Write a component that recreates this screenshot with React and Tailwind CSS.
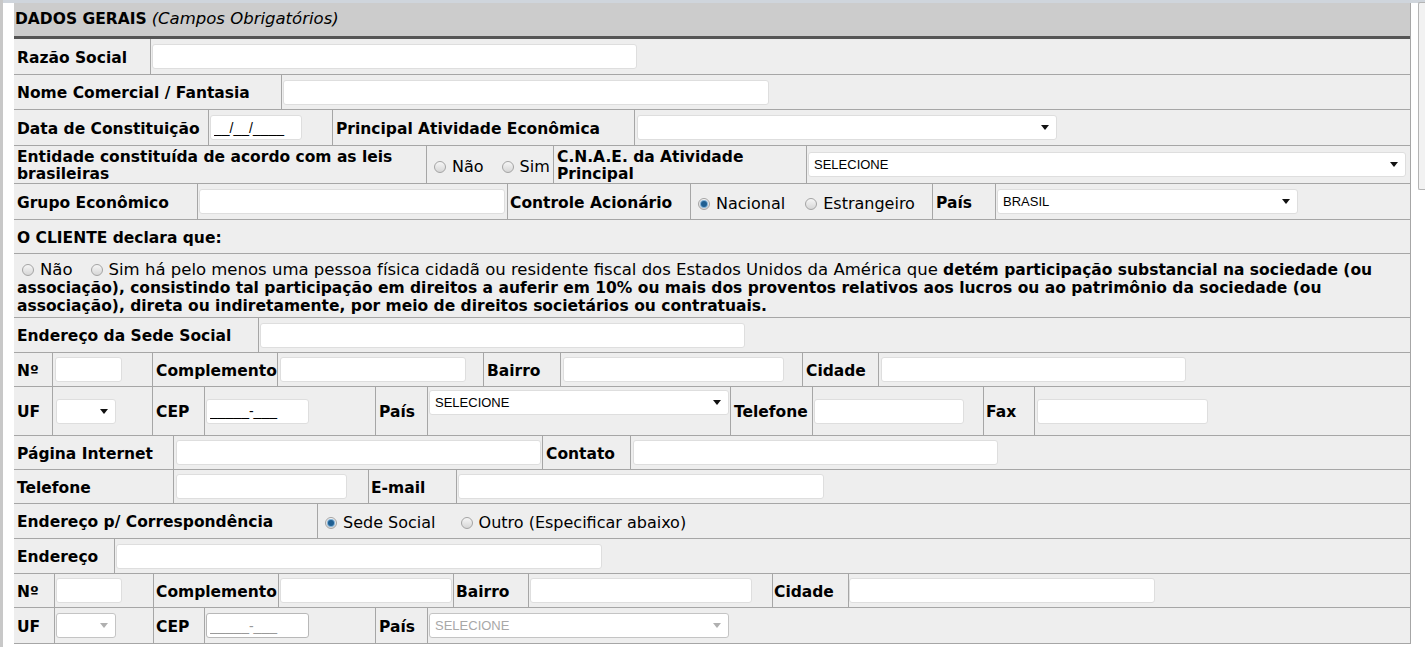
import { useState } from 'react';

const font = "font-['DejaVu_Sans',Verdana,sans-serif]";

function Field({ className = '', value = '', disabled = false }) {
  return (
    <input
      type="text"
      readOnly
      defaultValue={value}
      className={`h-[25px] bg-white rounded-[3px] border px-[3px] text-[14px] font-['Liberation_Sans',Arial,sans-serif] outline-none ${
        disabled ? 'border-[#b8b8b8] text-[#9a9a9a]' : 'border-[#dedede] text-black'
      } ${className}`}
    />
  );
}

function Select({ className = '', value = '', disabled = false }) {
  return (
    <div
      className={`h-[25px] bg-white rounded-[3px] border flex items-center justify-between pl-[5px] pr-[7px] text-[13px] font-['Liberation_Sans',Arial,sans-serif] ${
        disabled ? 'border-[#c4c4c4] text-[#a8a8a8]' : 'border-[#dedede] text-black'
      } ${className}`}
    >
      <span>{value}</span>
      <svg width="8" height="5" viewBox="0 0 8 5">
        <path d="M0 0 L8 0 L4 5 Z" fill={disabled ? '#b0b0b0' : '#111'} />
      </svg>
    </div>
  );
}

function Dot({ checked, className = '' }) {
  return (
    <span
      className={`inline-flex w-[12px] h-[12px] rounded-full border border-[#a4a4a4] bg-gradient-to-b from-[#f6f6f6] to-[#d6d6d6] items-center justify-center ${className}`}
    >
      {checked && <span className="w-[6px] h-[6px] rounded-full bg-[#1f5f92] ring-1 ring-[#7fb0d6]" />}
    </span>
  );
}

function Radio({ checked, label, className = '' }) {
  return (
    <span className={`inline-flex items-center ${className}`}>
      <Dot checked={checked} />
      <span className="ml-[6px] text-[16px] font-normal">{label}</span>
    </span>
  );
}

const row = 'flex border-b border-[#a6a6a6] bg-[#eeeeee]';
const cell = 'flex items-center border-l border-[#a6a6a6]';
const lbl = 'flex items-center pl-[3px] pt-[4px] font-bold text-[15.5px]';
const bcell = 'pt-[4px] font-bold text-[15.5px]';

export default function App() {
  const [corresp] = useState('sede');

  return (
    <div className={`relative min-h-[647px] bg-white ${font} text-black`}>
      <div className="h-[3px] bg-[#cfd5dc]" />
      <div className="absolute left-0 top-0 w-[3px] h-[647px] bg-[#c8c8c8]" />

      <div className="ml-[14px] w-[1397px] border-r border-[#a6a6a6]">
        <div className="h-[36px] bg-[#cccccc] border-b-[3px] border-[#555555] flex items-center pl-[1px]">
          <span className="font-bold text-[15.5px]">DADOS GERAIS</span>
          <span className="italic text-[16.5px] ml-[5px]">(Campos Obrigatórios)</span>
        </div>

        {/* Razão Social */}
        <div className={`${row} h-[36px]`}>
          <div className={`${lbl} w-[136px]`}>Razão Social</div>
          <div className={`${cell} flex-1 pl-[1px]`}>
            <Field className="w-[485px]" />
          </div>
        </div>

        {/* Nome Comercial */}
        <div className={`${row} h-[35px]`}>
          <div className={`${lbl} w-[267px]`}>Nome Comercial / Fantasia</div>
          <div className={`${cell} flex-1 pl-[1px]`}>
            <Field className="w-[486px]" />
          </div>
        </div>

        {/* Data de Constituição */}
        <div className={`${row} h-[36px]`}>
          <div className={`${lbl} w-[194px]`}>Data de Constituição</div>
          <div className={`${cell} w-[124px] pl-[1px]`}>
            <Field className="w-[92px]" value="__/__/____" />
          </div>
          <div className={`${cell} ${bcell} w-[302px] pl-[3px]`}>Principal Atividade Econômica</div>
          <div className={`${cell} flex-1 pl-[2px]`}>
            <Select className="w-[420px]" />
          </div>
        </div>

        {/* Entidade constituída */}
        <div className={`${row} h-[38px]`}>
          <div className="flex items-center pl-[3px] pt-[2px] font-bold text-[15.5px] w-[412px] leading-[17px]">
            Entidade constituída de acordo com as leis brasileiras
          </div>
          <div className={`${cell} w-[127px] pl-[7px] pt-[4px]`}>
            <Radio label="Não" />
            <Radio label="Sim" className="ml-[18px]" />
          </div>
          <div className={`${cell} w-[253px] pl-[3px] pt-[2px] font-bold text-[15.5px] leading-[17px]`}>
            C.N.A.E. da Atividade Principal
          </div>
          <div className={`${cell} flex-1 pl-[1px]`}>
            <Select className="w-[598px]" value="SELECIONE" />
          </div>
        </div>

        {/* Grupo Econômico */}
        <div className={`${row} h-[36px]`}>
          <div className={`${lbl} w-[183px]`}>Grupo Econômico</div>
          <div className={`${cell} w-[310px] pl-[1px]`}>
            <Field className="w-[306px]" />
          </div>
          <div className={`${cell} ${bcell} w-[183px] pl-[2px]`}>Controle Acionário</div>
          <div className={`${cell} w-[242px] pl-[7px] pt-[4px]`}>
            <Radio checked label="Nacional" />
            <Radio label="Estrangeiro" className="ml-[20px]" />
          </div>
          <div className={`${cell} ${bcell} w-[63px] pl-[3px]`}>País</div>
          <div className={`${cell} flex-1 pl-[1px]`}>
            <Select className="w-[301px]" value="BRASIL" />
          </div>
        </div>

        {/* O CLIENTE declara */}
        <div className={`${row} h-[34px]`}>
          <div className={`${lbl} flex-1`}>O CLIENTE declara que:</div>
        </div>

        <div className={`${row} h-[64px]`}>
          <div className="flex items-center px-[3px] pt-[4px] flex-1">
            <p className="text-[15.5px] leading-[18px]">
              <span className="text-[16.5px]">
                <Dot className="ml-[5px] mr-[6px] align-[-1px]" />
                Não
                <Dot className="ml-[18px] mr-[6px] align-[-1px]" />
                Sim há pelo menos uma pessoa física cidadã ou residente fiscal dos Estados Unidos da América que{' '}
              </span>
              <b>
                detém participação substancial na sociedade (ou associação), consistindo tal participação em direitos a
                auferir em 10% ou mais dos proventos relativos aos lucros ou ao patrimônio da sociedade (ou associação),
                direta ou indiretamente, por meio de direitos societários ou contratuais.
              </b>
            </p>
          </div>
        </div>

        {/* Endereço da Sede Social */}
        <div className={`${row} h-[35px]`}>
          <div className={`${lbl} w-[244px]`}>Endereço da Sede Social</div>
          <div className={`${cell} flex-1 pl-[1px]`}>
            <Field className="w-[485px]" />
          </div>
        </div>

        <div className={`${row} h-[34px]`}>
          <div className={`${lbl} w-[38px]`}>Nº</div>
          <div className={`${cell} w-[100px] pl-[2px]`}>
            <Field className="w-[67px]" />
          </div>
          <div className={`${cell} ${bcell} w-[125px] pl-[3px]`}>Complemento</div>
          <div className={`${cell} w-[206px] pl-[2px]`}>
            <Field className="w-[186px]" />
          </div>
          <div className={`${cell} ${bcell} w-[77px] pl-[3px]`}>Bairro</div>
          <div className={`${cell} w-[242px] pl-[2px]`}>
            <Field className="w-[221px]" />
          </div>
          <div className={`${cell} ${bcell} w-[76px] pl-[3px]`}>Cidade</div>
          <div className={`${cell} flex-1 pl-[2px]`}>
            <Field className="w-[305px]" />
          </div>
        </div>

        <div className={`${row} h-[49px]`}>
          <div className={`${lbl} w-[38px]`}>UF</div>
          <div className={`${cell} w-[100px] pl-[3px]`}>
            <Select className="w-[60px]" />
          </div>
          <div className={`${cell} ${bcell} w-[52px] pl-[3px]`}>CEP</div>
          <div className={`${cell} w-[171px] pl-[1px]`}>
            <Field className="w-[103px]" value="_____-___" />
          </div>
          <div className={`${cell} ${bcell} w-[52px] pl-[3px]`}>País</div>
          <div className={`${cell} w-[303px] pl-[1px] !items-start pt-[3px]`}>
            <Select className="w-[300px]" value="SELECIONE" />
          </div>
          <div className={`${cell} ${bcell} w-[82px] pl-[3px]`}>Telefone</div>
          <div className={`${cell} w-[171px] pl-[1px]`}>
            <Field className="w-[150px]" />
          </div>
          <div className={`${cell} ${bcell} w-[51px] pl-[2px]`}>Fax</div>
          <div className={`${cell} flex-1 pl-[2px]`}>
            <Field className="w-[171px]" />
          </div>
        </div>

        <div className={`${row} h-[34px]`}>
          <div className={`${lbl} w-[159px]`}>Página Internet</div>
          <div className={`${cell} w-[369px] pl-[2px]`}>
            <Field className="w-[365px]" />
          </div>
          <div className={`${cell} ${bcell} w-[88px] pl-[3px]`}>Contato</div>
          <div className={`${cell} flex-1 pl-[2px]`}>
            <Field className="w-[365px]" />
          </div>
        </div>

        <div className={`${row} h-[34px]`}>
          <div className={`${lbl} w-[159px]`}>Telefone</div>
          <div className={`${cell} w-[195px] pl-[2px]`}>
            <Field className="w-[171px]" />
          </div>
          <div className={`${cell} ${bcell} w-[88px] pl-[2px]`}>E-mail</div>
          <div className={`${cell} flex-1 pl-[1px]`}>
            <Field className="w-[366px]" />
          </div>
        </div>

        {/* Correspondência */}
        <div className={`${row} h-[35px]`}>
          <div className={`${lbl} w-[303px]`}>Endereço p/ Correspondência</div>
          <div className={`${cell} flex-1 pl-[7px] pt-[4px]`}>
            <Radio checked={corresp === 'sede'} label="Sede Social" />
            <Radio checked={corresp === 'outro'} label="Outro (Especificar abaixo)" className="ml-[25px]" />
          </div>
        </div>

        <div className={`${row} h-[35px]`}>
          <div className={`${lbl} w-[100px]`}>Endereço</div>
          <div className={`${cell} flex-1 pl-[1px]`}>
            <Field className="w-[486px]" />
          </div>
        </div>

        <div className={`${row} h-[34px]`}>
          <div className={`${lbl} w-[40px]`}>Nº</div>
          <div className={`${cell} w-[99px] pl-[1px]`}>
            <Field className="w-[66px]" />
          </div>
          <div className={`${cell} ${bcell} w-[125px] pl-[2px]`}>Complemento</div>
          <div className={`${cell} w-[175px] pl-[1px]`}>
            <Field className="w-[172px]" />
          </div>
          <div className={`${cell} ${bcell} w-[75px] pl-[2px]`}>Bairro</div>
          <div className={`${cell} w-[244px] pl-[1px]`}>
            <Field className="w-[222px]" />
          </div>
          <div className={`${cell} ${bcell} w-[76px] pl-[1px]`}>Cidade</div>
          <div className={`${cell} flex-1`}>
            <Field className="w-[306px]" />
          </div>
        </div>

        <div className={`${row} h-[36px]`}>
          <div className={`${lbl} w-[40px]`}>UF</div>
          <div className={`${cell} w-[99px] pl-[1px]`}>
            <Select className="w-[60px]" disabled />
          </div>
          <div className={`${cell} ${bcell} w-[51px] pl-[2px]`}>CEP</div>
          <div className={`${cell} w-[171px] pl-[1px]`}>
            <Field className="w-[103px]" value="_____-___" disabled />
          </div>
          <div className={`${cell} ${bcell} w-[52px] pl-[3px]`}>País</div>
          <div className={`${cell} flex-1 pl-[1px]`}>
            <Select className="w-[300px]" value="SELECIONE" disabled />
          </div>
        </div>
      </div>

      {/* scrollbar thumb */}
      <div className="absolute right-0 top-[2px] w-[7px] h-[188px] border border-r-0 border-[#b4b4b4] rounded-l-[2px] bg-[#f2f2f2]" />
    </div>
  );
}
